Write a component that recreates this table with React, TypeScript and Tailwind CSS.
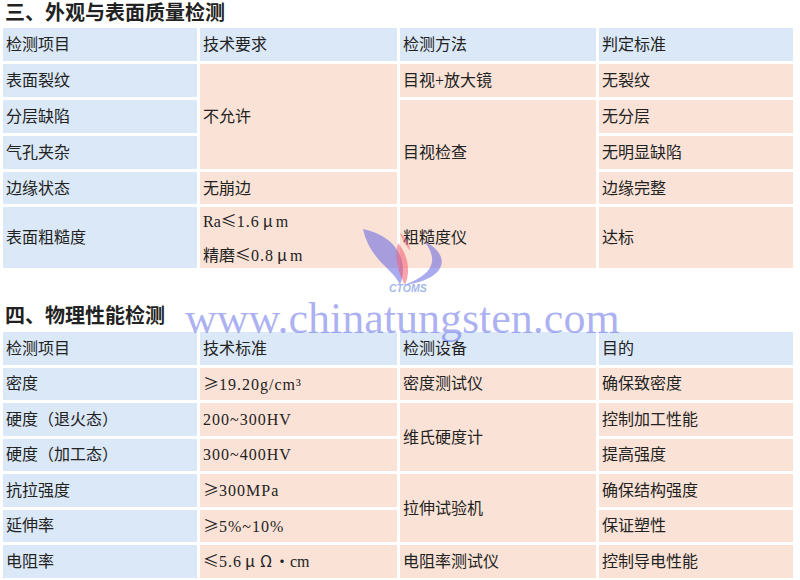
type Tone = "head" | "blue" | "peach";

type Cell = {
  text: string;
  tone: Tone;
  span?: 2 | 3;
};

const toneClass: Record<Tone, string> = {
  head: "bg-[#dae8f7]",
  blue: "bg-[#dae8f7]",
  peach: "bg-[#fbe2d6]",
};

const spanClass = { 2: "row-span-2", 3: "row-span-3" };

const qualityCells: Cell[] = [
  { text: "检测项目", tone: "head" },
  { text: "技术要求", tone: "head" },
  { text: "检测方法", tone: "head" },
  { text: "判定标准", tone: "head" },

  { text: "表面裂纹", tone: "blue" },
  { text: "不允许", tone: "peach", span: 3 },
  { text: "目视+放大镜", tone: "peach" },
  { text: "无裂纹", tone: "peach" },

  { text: "分层缺陷", tone: "blue" },
  { text: "目视检查", tone: "peach", span: 3 },
  { text: "无分层", tone: "peach" },

  { text: "气孔夹杂", tone: "blue" },
  { text: "无明显缺陷", tone: "peach" },

  { text: "边缘状态", tone: "blue" },
  { text: "无崩边", tone: "peach" },
  { text: "边缘完整", tone: "peach" },

  { text: "表面粗糙度", tone: "blue" },
  { text: "Ra≤1.6μm\n精磨≤0.8μm", tone: "peach" },
  { text: "粗糙度仪", tone: "peach" },
  { text: "达标", tone: "peach" },
];

const physicalCells: Cell[] = [
  { text: "检测项目", tone: "head" },
  { text: "技术标准", tone: "head" },
  { text: "检测设备", tone: "head" },
  { text: "目的", tone: "head" },

  { text: "密度", tone: "blue" },
  { text: "≥19.20g/cm³", tone: "peach" },
  { text: "密度测试仪", tone: "peach" },
  { text: "确保致密度", tone: "peach" },

  { text: "硬度（退火态）", tone: "blue" },
  { text: "200~300HV", tone: "peach" },
  { text: "维氏硬度计", tone: "peach", span: 2 },
  { text: "控制加工性能", tone: "peach" },

  { text: "硬度（加工态）", tone: "blue" },
  { text: "300~400HV", tone: "peach" },
  { text: "提高强度", tone: "peach" },

  { text: "抗拉强度", tone: "blue" },
  { text: "≥300MPa", tone: "peach" },
  { text: "拉伸试验机", tone: "peach", span: 2 },
  { text: "确保结构强度", tone: "peach" },

  { text: "延伸率", tone: "blue" },
  { text: "≥5%~10%", tone: "peach" },
  { text: "保证塑性", tone: "peach" },

  { text: "电阻率", tone: "blue" },
  { text: "≤5.6μΩ·cm", tone: "peach" },
  { text: "电阻率测试仪", tone: "peach" },
  { text: "控制导电性能", tone: "peach" },
];

// full-width symbols as the original SimSun-style table shows them
function Line({ text }: { text: string }) {
  const parts = text.split(/([≤≥μΩ·])/);
  return (
    <span>
      {parts.map((p, i) =>
        /^[≤≥μΩ·]$/.test(p) ? (
          <span key={i} className="inline-block w-[16px] text-center font-['Noto_Sans_CJK_SC',sans-serif]">
            {p}
          </span>
        ) : (
          <span key={i} className={/[0-9.]/.test(p) ? "tracking-[1px]" : ""}>
            {p}
          </span>
        )
      )}
    </span>
  );
}

function Table({ cells, rows }: { cells: Cell[]; rows: string }) {
  return (
    <div className={`grid w-[790px] grid-cols-[194px_197px_196px_194px] gap-[3px] ${rows}`}>
      {cells.map((c, i) => (
        <div
          key={i}
          className={`flex flex-col justify-center px-[3px] text-[16px] leading-[33px] text-[#222] ${toneClass[c.tone]} ${c.span ? spanClass[c.span] : ""}`}
        >
          {c.text.split("\n").map((l) => (
            <Line key={l} text={l} />
          ))}
        </div>
      ))}
    </div>
  );
}

function Watermark() {
  return (
    <div className="pointer-events-none absolute inset-0">
      {/* CTOMS logo */}
      <svg className="absolute left-[360px] top-[225px]" width="90" height="72" viewBox="0 0 90 72">
        <path d="M3,4 C34,10 50,34 40,60 C34,44 10,36 3,4 Z" fill="rgba(100,100,225,0.55)" />
        <path d="M38,18 C48,30 51,46 45,60 C38,48 34,32 38,18 Z" fill="rgba(240,90,110,0.55)" />
        <path d="M40,8 C46,12 50,18 50,26 C46,20 42,16 40,8 Z" fill="rgba(240,90,110,0.45)" />
        <path d="M64,16 C92,30 88,54 44,60 C72,50 80,36 64,16 Z" fill="rgba(100,100,225,0.55)" />
        <text
          x="29"
          y="67"
          fontSize="10.5"
          fontWeight="bold"
          fontStyle="italic"
          fontFamily="Liberation Sans, Arial, sans-serif"
          fill="rgba(120,150,230,0.7)"
        >
          CTOMS
        </text>
      </svg>
      <div className="absolute left-[185px] top-[297px] whitespace-nowrap font-['Liberation_Serif',serif] text-[44px] leading-[44px] text-[rgba(90,100,230,0.5)]">
        www.chinatungsten.com
      </div>
    </div>
  );
}

export default function App() {
  return (
    <div className="relative h-[580px] w-[800px] overflow-hidden bg-white pl-[3px] font-['Liberation_Serif','Noto_Sans_CJK_SC',serif]">
      <h2 className="mb-[2px] h-[26px] pl-[2px] text-[20px] font-bold leading-[26px] text-[#222]">
        三、外观与表面质量检测
      </h2>
      <Table cells={qualityCells} rows="grid-rows-[33px_33px_33px_33px_32px_61px]" />

      <h2 className="mb-[3px] mt-[35px] h-[26px] pl-[2px] text-[20px] font-bold leading-[26px] text-[#222]">
        四、物理性能检测
      </h2>
      <Table cells={physicalCells} rows="grid-rows-[repeat(7,32.5px)]" />

      <Watermark />
    </div>
  );
}
